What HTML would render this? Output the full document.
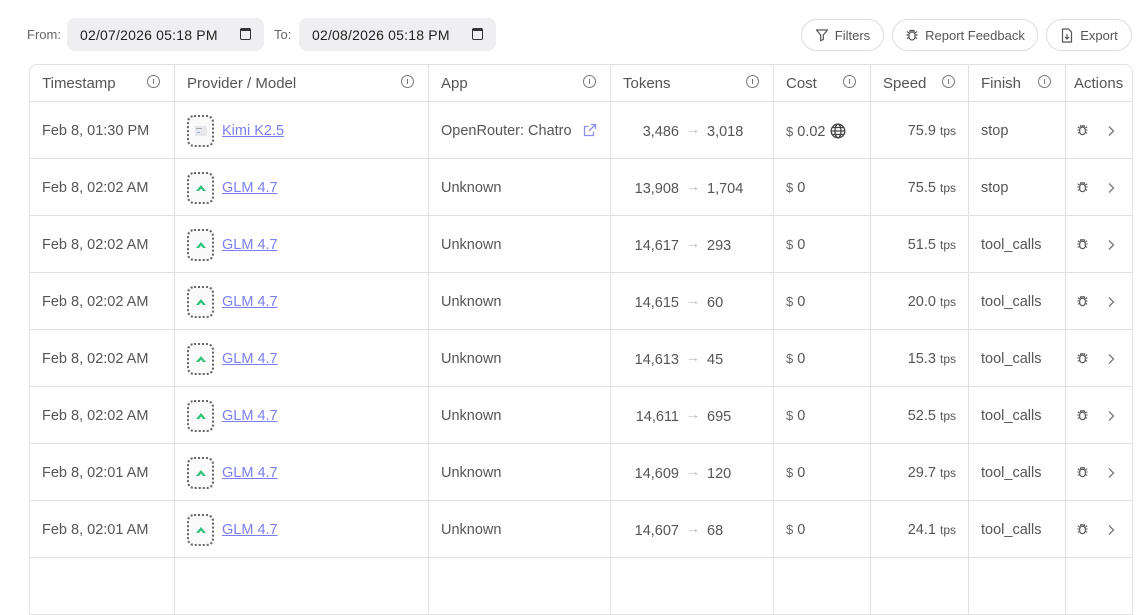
<!DOCTYPE html>
<html><head><meta charset="utf-8"><style>
*{box-sizing:border-box;margin:0;padding:0}
body{width:1145px;height:566px;overflow:hidden;background:#fff;font-family:"Liberation Sans",sans-serif;color:#555;font-size:14px;position:relative}
.lbl{position:absolute;top:27px;font-size:13px;color:#666}
.date{position:absolute;top:18px;height:33px;width:197px;background:#efeff1;border-radius:8px;font-size:14px;color:#222;padding:9px 0 0 13px;letter-spacing:0.2px}
.cal{position:absolute;right:13px;top:10px;width:11px;height:12px;border:1.5px solid #333;border-top-width:3px;border-radius:2px}
.btn{position:absolute;top:19px;height:32px;border:1px solid #ddd;border-radius:16px;font-size:13px;color:#555;padding:8px 0 0 0;display:flex;align-items:flex-start;justify-content:center;gap:6px}
table{position:absolute;left:29px;top:64px;border-collapse:separate;border-spacing:0;border:1px solid #e2e2e2;border-radius:8px 8px 0 0;border-bottom:none;table-layout:fixed;width:1102px}
td,th{border-right:1px solid #e2e2e2;border-bottom:1px solid #e2e2e2;padding:0 12px;white-space:nowrap;overflow:hidden;font-weight:normal;text-align:left;position:relative}
th{height:37px;font-size:15px;color:#555}
td{height:57px;font-size:14.5px;padding-top:2px}
td:last-child,th:last-child{border-right:none}
.i{position:absolute;right:14px;top:10px;width:13px;height:13px;border:1.3px solid #777;border-radius:50%}
.i:after{content:"";position:absolute;left:4.5px;top:3px;width:1.2px;height:5px;background:#777}
.ic{display:inline-block;width:27px;height:32px;border:2px dotted #666;border-radius:7px;vertical-align:middle;margin-right:8px;position:relative;background:#fafafa}
.ic svg{position:absolute;left:6px;top:9px}
a{color:#7b7ff0;text-decoration:underline}
.r{text-align:right}
.tk .a{display:inline-block;width:56px;text-align:right}
.tk .ar{display:inline-block;width:28px;text-align:center;color:#bbb;vertical-align:2px}
.d{font-size:13px;color:#666}
.tps{font-size:12px}
.act{padding-left:10px}
.act svg{vertical-align:-2px}
.chev{display:inline-block;margin-left:18px;vertical-align:-2px}
</style></head><body>
<div class="lbl" style="left:27px">From:</div>
<div class="date" style="left:67px">02/07/2026 05:18 PM<span class="cal"></span></div>
<div class="lbl" style="left:274px">To:</div>
<div class="date" style="left:299px">02/08/2026 05:18 PM<span class="cal"></span></div>
<div class="btn" style="left:801px;width:83px"><svg width="14" height="14" viewBox="0 0 14 14"><path d="M1.5 2h11l-4.2 5v4.5l-2.6 1.2V7z" fill="none" stroke="#555" stroke-width="1.2" stroke-linejoin="round"/></svg>Filters</div>
<div class="btn" style="left:892px;width:146px"><svg width="14" height="14" viewBox="0 0 14 14" fill="none" stroke="#555" stroke-width="1.2"><rect x="4" y="4" width="6" height="8" rx="3"/><path d="M5 4V2.5h4V4M1.5 7h2.5M10 7h2.5M2 10.5l2-1M12 10.5l-2-1M2 3.5l2 1.5M12 3.5l-2 1.5"/></svg>Report Feedback</div>
<div class="btn" style="left:1046px;width:86px"><svg width="14" height="15" viewBox="0 0 14 15" fill="none" stroke="#555" stroke-width="1.2"><path d="M2.5 1h6l3 3v10h-9z"/><path d="M7 6v5M5 9l2 2 2-2"/></svg>Export</div>
<table>
<colgroup><col style="width:145px"><col style="width:254px"><col style="width:182px"><col style="width:163px"><col style="width:97px"><col style="width:98px"><col style="width:97px"><col style="width:66px"></colgroup>
<tr><th>Timestamp<span class="i"></span></th><th>Provider / Model<span class="i"></span></th><th>App<span class="i"></span></th><th>Tokens<span class="i"></span></th><th>Cost<span class="i"></span></th><th>Speed<span class="i" style="right:13px"></span></th><th>Finish<span class="i"></span></th><th style="padding-left:8px">Actions</th></tr>
<tr><td>Feb 8, 01:30 PM</td><td><span class="ic"><svg width="12" height="10"><rect width="12" height="10" fill="#e8e8ec"/><rect x="1" y="2" width="6" height="1" fill="#aab"/><rect x="2" y="6" width="3" height="1" fill="#9ad"/></svg></span><a>Kimi K2.5</a></td><td>OpenRouter: Chatro<svg style="position:absolute;right:13px;top:21px" width="14" height="14" viewBox="0 0 14 14" fill="none" stroke="#8a8ff0" stroke-width="1.3"><path d="M8 1.5h4.5V6M12.5 1.5 6 8M10.5 8.5v4h-9v-9h4"/></svg></td><td class="tk"><span class="a">3,486</span><span class="ar">→</span>3,018</td><td><span class="d">$</span> 0.02 <svg style="vertical-align:-3px" width="16" height="16" viewBox="0 0 16 16" fill="none" stroke="#444" stroke-width="1.3"><circle cx="8" cy="8" r="6.8"/><ellipse cx="8" cy="8" rx="3" ry="6.8"/><path d="M1.2 8h13.6M2.5 4.5h11M2.5 11.5h11"/></svg></td><td class="r">75.9 <span class="tps">tps</span></td><td>stop</td><td class="act"><svg width="13" height="14" viewBox="0 0 14 14" fill="none" stroke="#555" stroke-width="1.2"><rect x="4" y="4" width="6" height="8" rx="3"/><path d="M5 4V2.5h4V4M1.5 7h2.5M10 7h2.5M2 10.5l2-1M12 10.5l-2-1M2 3.5l2 1.5M12 3.5l-2 1.5"/></svg><svg class="chev" width="8" height="12" viewBox="0 0 8 12"><path d="M2 1.5 6.5 6 2 10.5" fill="none" stroke="#777" stroke-width="1.3"/></svg></td></tr>
<tr><td>Feb 8, 02:02 AM</td><td><span class="ic"><svg width="12" height="10"><path d="M1 8 6 2 11 8 8 8 6 5.5 4 8z" fill="#2fc27a"/></svg></span><a>GLM 4.7</a></td><td>Unknown</td><td class="tk"><span class="a">13,908</span><span class="ar">→</span>1,704</td><td><span class="d">$</span> 0</td><td class="r">75.5 <span class="tps">tps</span></td><td>stop</td><td class="act"><svg width="13" height="14" viewBox="0 0 14 14" fill="none" stroke="#555" stroke-width="1.2"><rect x="4" y="4" width="6" height="8" rx="3"/><path d="M5 4V2.5h4V4M1.5 7h2.5M10 7h2.5M2 10.5l2-1M12 10.5l-2-1M2 3.5l2 1.5M12 3.5l-2 1.5"/></svg><svg class="chev" width="8" height="12" viewBox="0 0 8 12"><path d="M2 1.5 6.5 6 2 10.5" fill="none" stroke="#777" stroke-width="1.3"/></svg></td></tr>
<tr><td>Feb 8, 02:02 AM</td><td><span class="ic"><svg width="12" height="10"><path d="M1 8 6 2 11 8 8 8 6 5.5 4 8z" fill="#2fc27a"/></svg></span><a>GLM 4.7</a></td><td>Unknown</td><td class="tk"><span class="a">14,617</span><span class="ar">→</span>293</td><td><span class="d">$</span> 0</td><td class="r">51.5 <span class="tps">tps</span></td><td>tool_calls</td><td class="act"><svg width="13" height="14" viewBox="0 0 14 14" fill="none" stroke="#555" stroke-width="1.2"><rect x="4" y="4" width="6" height="8" rx="3"/><path d="M5 4V2.5h4V4M1.5 7h2.5M10 7h2.5M2 10.5l2-1M12 10.5l-2-1M2 3.5l2 1.5M12 3.5l-2 1.5"/></svg><svg class="chev" width="8" height="12" viewBox="0 0 8 12"><path d="M2 1.5 6.5 6 2 10.5" fill="none" stroke="#777" stroke-width="1.3"/></svg></td></tr>
<tr><td>Feb 8, 02:02 AM</td><td><span class="ic"><svg width="12" height="10"><path d="M1 8 6 2 11 8 8 8 6 5.5 4 8z" fill="#2fc27a"/></svg></span><a>GLM 4.7</a></td><td>Unknown</td><td class="tk"><span class="a">14,615</span><span class="ar">→</span>60</td><td><span class="d">$</span> 0</td><td class="r">20.0 <span class="tps">tps</span></td><td>tool_calls</td><td class="act"><svg width="13" height="14" viewBox="0 0 14 14" fill="none" stroke="#555" stroke-width="1.2"><rect x="4" y="4" width="6" height="8" rx="3"/><path d="M5 4V2.5h4V4M1.5 7h2.5M10 7h2.5M2 10.5l2-1M12 10.5l-2-1M2 3.5l2 1.5M12 3.5l-2 1.5"/></svg><svg class="chev" width="8" height="12" viewBox="0 0 8 12"><path d="M2 1.5 6.5 6 2 10.5" fill="none" stroke="#777" stroke-width="1.3"/></svg></td></tr>
<tr><td>Feb 8, 02:02 AM</td><td><span class="ic"><svg width="12" height="10"><path d="M1 8 6 2 11 8 8 8 6 5.5 4 8z" fill="#2fc27a"/></svg></span><a>GLM 4.7</a></td><td>Unknown</td><td class="tk"><span class="a">14,613</span><span class="ar">→</span>45</td><td><span class="d">$</span> 0</td><td class="r">15.3 <span class="tps">tps</span></td><td>tool_calls</td><td class="act"><svg width="13" height="14" viewBox="0 0 14 14" fill="none" stroke="#555" stroke-width="1.2"><rect x="4" y="4" width="6" height="8" rx="3"/><path d="M5 4V2.5h4V4M1.5 7h2.5M10 7h2.5M2 10.5l2-1M12 10.5l-2-1M2 3.5l2 1.5M12 3.5l-2 1.5"/></svg><svg class="chev" width="8" height="12" viewBox="0 0 8 12"><path d="M2 1.5 6.5 6 2 10.5" fill="none" stroke="#777" stroke-width="1.3"/></svg></td></tr>
<tr><td>Feb 8, 02:02 AM</td><td><span class="ic"><svg width="12" height="10"><path d="M1 8 6 2 11 8 8 8 6 5.5 4 8z" fill="#2fc27a"/></svg></span><a>GLM 4.7</a></td><td>Unknown</td><td class="tk"><span class="a">14,611</span><span class="ar">→</span>695</td><td><span class="d">$</span> 0</td><td class="r">52.5 <span class="tps">tps</span></td><td>tool_calls</td><td class="act"><svg width="13" height="14" viewBox="0 0 14 14" fill="none" stroke="#555" stroke-width="1.2"><rect x="4" y="4" width="6" height="8" rx="3"/><path d="M5 4V2.5h4V4M1.5 7h2.5M10 7h2.5M2 10.5l2-1M12 10.5l-2-1M2 3.5l2 1.5M12 3.5l-2 1.5"/></svg><svg class="chev" width="8" height="12" viewBox="0 0 8 12"><path d="M2 1.5 6.5 6 2 10.5" fill="none" stroke="#777" stroke-width="1.3"/></svg></td></tr>
<tr><td>Feb 8, 02:01 AM</td><td><span class="ic"><svg width="12" height="10"><path d="M1 8 6 2 11 8 8 8 6 5.5 4 8z" fill="#2fc27a"/></svg></span><a>GLM 4.7</a></td><td>Unknown</td><td class="tk"><span class="a">14,609</span><span class="ar">→</span>120</td><td><span class="d">$</span> 0</td><td class="r">29.7 <span class="tps">tps</span></td><td>tool_calls</td><td class="act"><svg width="13" height="14" viewBox="0 0 14 14" fill="none" stroke="#555" stroke-width="1.2"><rect x="4" y="4" width="6" height="8" rx="3"/><path d="M5 4V2.5h4V4M1.5 7h2.5M10 7h2.5M2 10.5l2-1M12 10.5l-2-1M2 3.5l2 1.5M12 3.5l-2 1.5"/></svg><svg class="chev" width="8" height="12" viewBox="0 0 8 12"><path d="M2 1.5 6.5 6 2 10.5" fill="none" stroke="#777" stroke-width="1.3"/></svg></td></tr>
<tr><td>Feb 8, 02:01 AM</td><td><span class="ic"><svg width="12" height="10"><path d="M1 8 6 2 11 8 8 8 6 5.5 4 8z" fill="#2fc27a"/></svg></span><a>GLM 4.7</a></td><td>Unknown</td><td class="tk"><span class="a">14,607</span><span class="ar">→</span>68</td><td><span class="d">$</span> 0</td><td class="r">24.1 <span class="tps">tps</span></td><td>tool_calls</td><td class="act"><svg width="13" height="14" viewBox="0 0 14 14" fill="none" stroke="#555" stroke-width="1.2"><rect x="4" y="4" width="6" height="8" rx="3"/><path d="M5 4V2.5h4V4M1.5 7h2.5M10 7h2.5M2 10.5l2-1M12 10.5l-2-1M2 3.5l2 1.5M12 3.5l-2 1.5"/></svg><svg class="chev" width="8" height="12" viewBox="0 0 8 12"><path d="M2 1.5 6.5 6 2 10.5" fill="none" stroke="#777" stroke-width="1.3"/></svg></td></tr>
<tr><td></td><td></td><td></td><td></td><td></td><td></td><td></td><td></td></tr>
</table>
</body></html>
